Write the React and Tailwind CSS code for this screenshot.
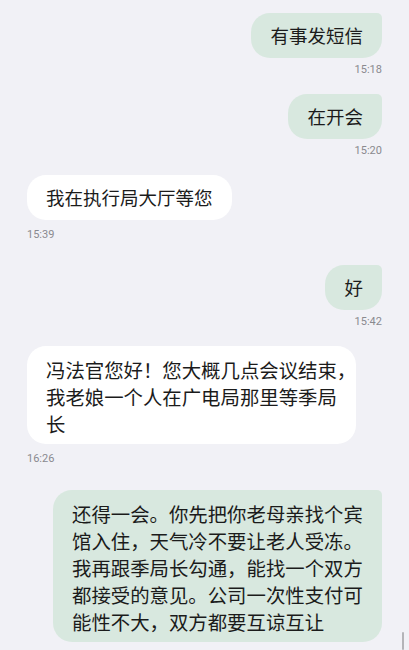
import React from "react";

const cjk = "font-['Noto_Sans_CJK_SC','Noto_Sans',sans-serif]";

function Ts({ children, side, mt }) {
  return (
    <div
      className={`font-['Roboto','Liberation_Sans',sans-serif] text-[11px] leading-[14px] text-[#8a8a8f] ${
        side === "right" ? "text-right" : "text-left"
      } ${mt}`}
    >
      {children}
    </div>
  );
}

function Single({ text, side }) {
  const sent = side === "right";
  return (
    <div className={`flex ${sent ? "justify-end" : "justify-start"}`}>
      <div
        className={`${cjk} text-[18.5px] leading-[27px] text-[#1b1b1b] px-[19px] pt-[9px] pb-[9px] rounded-[19px] ${
          sent ? "bg-[#d8e8df] rounded-tr-[5px]" : "bg-white rounded-tl-[19px]"
        }`}
      >
        {text}
      </div>
    </div>
  );
}

function Multi({ lines, side }) {
  const sent = side === "right";
  return (
    <div className={`flex ${sent ? "justify-end" : "justify-start"}`}>
      <div
        className={`${cjk} text-[19.4px] leading-[27.2px] text-[#1b1b1b] pl-[19px] pr-[19px] pt-[10px] pb-[6px] rounded-[19px] ${
          sent ? "bg-[#d8e8df] rounded-tr-[5px] w-[329px]" : "bg-white w-[329px]"
        }`}
      >
        {lines.map((l, i) => (
          <div key={i} className="whitespace-nowrap">
            {l}
          </div>
        ))}
      </div>
    </div>
  );
}

export default function App() {
  return (
    <div className="relative h-[650px] w-full overflow-hidden bg-[#f1f1f6]">
      <div className="flex flex-col px-[27px] pt-[13px]">
        <Single text="有事发短信" side="right" />
        <Ts side="right" mt="mt-[5px]">15:18</Ts>

        <div className="mt-[17px]">
          <Single text="在开会" side="right" />
        </div>
        <Ts side="right" mt="mt-[5px]">15:20</Ts>

        <div className="mt-[17px]">
          <Single text="我在执行局大厅等您" side="left" />
        </div>
        <Ts side="left" mt="mt-[8px]">15:39</Ts>

        <div className="mt-[23px]">
          <Single text="好" side="right" />
        </div>
        <Ts side="right" mt="mt-[5px]">15:42</Ts>

        <div className="mt-[17px]">
          <Multi
            side="left"
            lines={[
              "冯法官您好！您大概几点会议结束，",
              "我老娘一个人在广电局那里等季局",
              "长",
            ]}
          />
        </div>
        <Ts side="left" mt="mt-[8px]">16:26</Ts>

        <div className="mt-[24px]">
          <Multi
            side="right"
            lines={[
              "还得一会。你先把你老母亲找个宾",
              "馆入住，天气冷不要让老人受冻。",
              "我再跟季局长勾通，能找一个双方",
              "都接受的意见。公司一次性支付可",
              "能性不大，双方都要互谅互让",
            ]}
          />
        </div>
      </div>
      <div className="absolute right-[5px] top-[632px] h-[18px] w-[2px] rounded-full bg-[#b4b4b8]" />
    </div>
  );
}
